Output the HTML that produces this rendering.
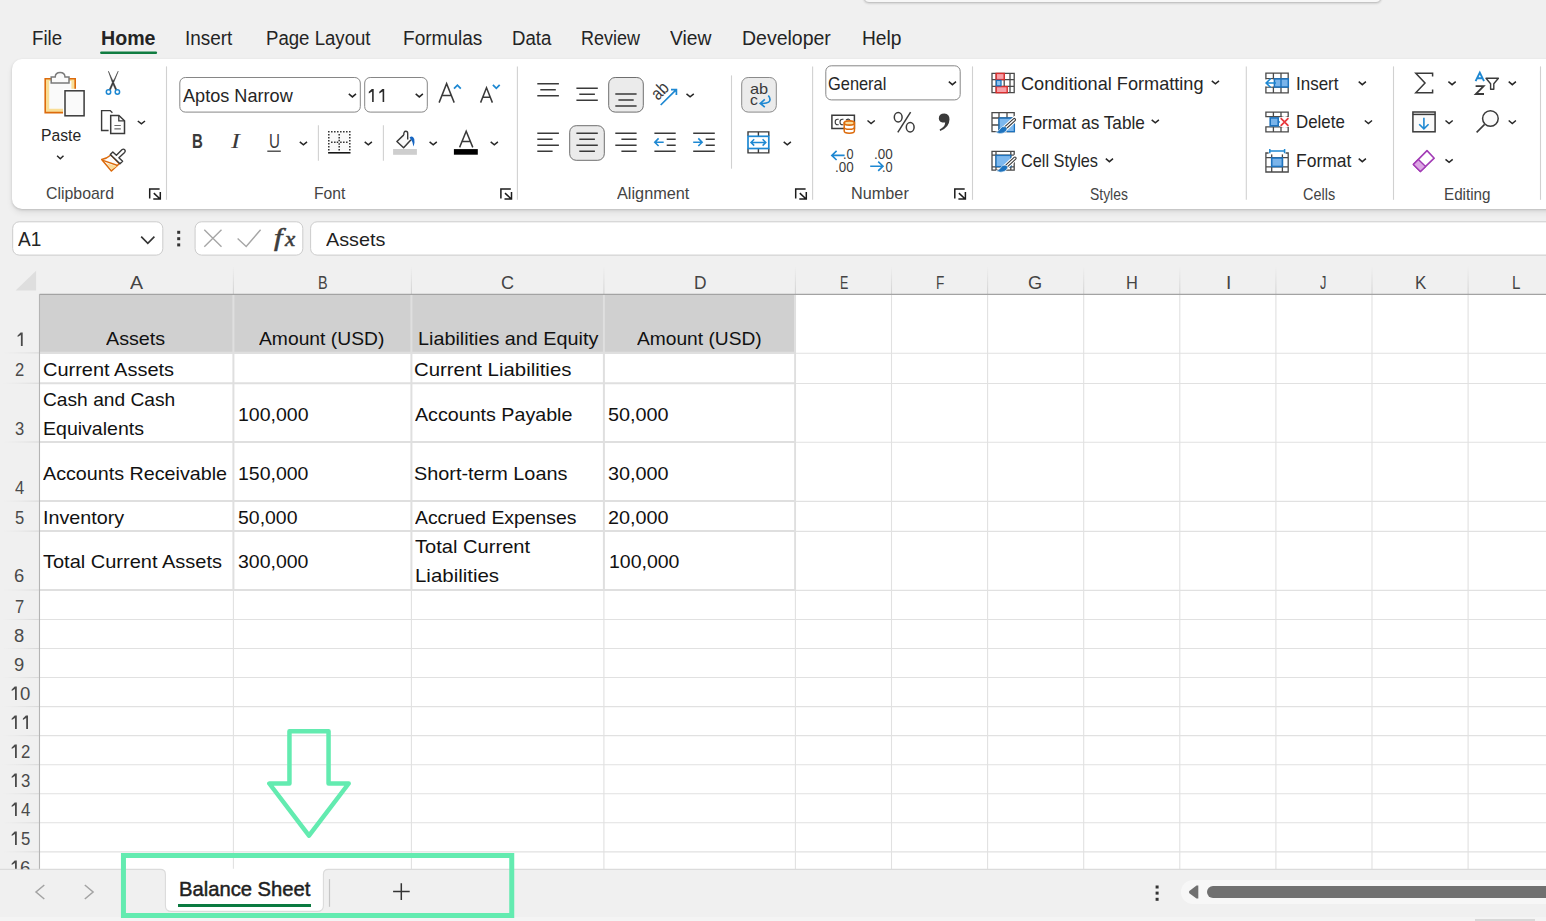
<!DOCTYPE html>
<html><head><meta charset="utf-8"><title>Excel</title>
<style>
html,body{margin:0;padding:0;}
body{width:1546px;height:921px;overflow:hidden;position:relative;background:#f0f0f0;font-family:"Liberation Sans",sans-serif;}
.t{position:absolute;white-space:nowrap;transform-origin:0 0;display:block;}
.b{position:absolute;}
svg.o{position:absolute;left:0;top:0;pointer-events:none;}
</style></head><body>
<div class="b" style="left:862.5px;top:-12px;width:519px;height:14.5px;background:#f7f7f7;border:1px solid #c4c4c4;border-radius:6px;box-sizing:border-box;box-shadow:0 1px 2px rgba(0,0,0,.12);"></div>
<div class="b" style="left:12px;top:59px;width:1560px;height:150px;background:#fff;border-radius:10px;box-shadow:0 1px 2.5px rgba(0,0,0,.17),0 4px 6px rgba(0,0,0,.07);"></div>
<div class="b" style="left:40px;top:295px;width:1520px;height:574px;background:#fff;"></div>
<div class="b" style="left:0px;top:869.4px;width:1546px;height:52px;background:#f0f0f0;"></div>
<div class="b" style="left:0px;top:917.3px;width:1546px;height:4px;background:#f4f4f4;"></div>
<div class="b" style="left:1474.9px;top:918.6px;width:60px;height:3px;background:#d8d8d8;"></div>
<div class="b" style="left:1180.8px;top:879.6px;width:400px;height:24.8px;background:#f7f7f7;border-radius:12.4px;"></div>
<div class="b" style="left:1206.6px;top:885.9px;width:400px;height:12px;background:#707070;border-radius:6px;"></div>
<svg class="o" width="1546" height="921" viewBox="0 0 1546 921">
<rect x="100.10" y="51.50" width="57.00" height="2.40" rx="1.20" fill="#107c41"/>
<path d="M45.2 78.7 H75.2 V92 H65 V112.6 H45.2 Z" fill="#f9de96" stroke="#dc6b0c" stroke-width="1.6"/>
<path d="M49.2 81 H71.4 V92 H65 V108.8 H49.2 Z" fill="#fafafa"/>
<path d="M51.2 83 V77 H55.2 Q55.5 72.6 60.1 72.6 Q64.7 72.6 65 77 H69 V83 Z" fill="#fafafa" stroke="#7a7a7a" stroke-width="1.5"/>
<rect x="63" y="88.8" width="23" height="29" fill="#fff"/>
<rect x="65" y="90.8" width="19.1" height="25" fill="#fafafa" stroke="#3a3a3a" stroke-width="1.5"/>
<path d="M57.1 155.8 L60.3 158.7 L63.5 155.8" fill="none" stroke="#262626" stroke-width="1.5"/>
<path d="M108.4 71.2 L112.6 80.2 L113.9 80.2 L118.2 71.2 L113.7 82.6 L116.9 89.8 L115.6 90.2 L113 84.2 L110.4 90.2 L109.1 89.8 L112.3 82.6 Z" fill="#3a3a3a" stroke="#3a3a3a" stroke-width="0.5" stroke-linejoin="round"/>
<circle cx="108.5" cy="92" r="2.2" fill="#fff" stroke="#1e88d2" stroke-width="1.5"/><circle cx="117.4" cy="92" r="2.2" fill="#fff" stroke="#1e88d2" stroke-width="1.5"/>
<path d="M108.6 130.5 H101.6 V110.6 H110.2 L112.4 112.7" fill="none" stroke="#3a3a3a" stroke-width="1.4"/>
<path d="M110.7 115.4 H118.9 L124.5 120.7 V133.4 H110.7 Z" fill="#fdfdfd" stroke="#3a3a3a" stroke-width="1.5"/>
<path d="M118.8 115.6 V120.8 H124.4" fill="none" stroke="#3a3a3a" stroke-width="1.3"/>
<path d="M114.4 125.5 H120.8 M114.4 128.9 H120.8" stroke="#6a6a6a" stroke-width="1.2"/>
<path d="M137.8 121.0 L141.4 123.9 L145.0 121.0" fill="none" stroke="#262626" stroke-width="1.5"/>
<path d="M101.7 159.4 Q106.8 158.6 110.9 155 L119.3 163.7 L111.4 170.9 Z" fill="#fdfdfd" stroke="#dc6b0c" stroke-width="1.5" stroke-linejoin="round"/>
<path d="M106.6 163.2 L116.8 166.2 L111.4 169.8 Z" fill="#fbdc9a"/>
<path d="M103 160.3 L117.6 165.5" stroke="#dc6b0c" stroke-width="1.4"/>
<path d="M110.3 154.4 L112.8 151.9 L116.4 155.3 L121.9 149.7 Q123.5 148.5 124.7 149.8 Q125.9 151.1 124.6 152.4 L118.9 157.8 L122.6 161.3 L120 163.8 Z" fill="#fff" stroke="#3a3a3a" stroke-width="1.4" stroke-linejoin="round"/>
<path d="M149.7 198.6 V188.95 H159.6 M153.8 193.1 L160.1 199.0 M160.3 192.1 V198.9 H153.3" fill="none" stroke="#1c1c1c" stroke-width="1.5"/>
<path d="M166.5 66.4 V199.8" stroke="#d1d1d1" stroke-width="1.1"/>
<rect x="179.80" y="77.50" width="180.50" height="34.60" rx="5.50" fill="#fff" stroke="#868686" stroke-width="1.0"/>
<path d="M348.8 93.9 L352.4 96.9 L356.0 93.9" fill="none" stroke="#262626" stroke-width="1.5"/>
<rect x="364.70" y="77.50" width="62.60" height="34.60" rx="5.50" fill="#fff" stroke="#868686" stroke-width="1.0"/>
<path d="M373.70 88.90 H371.80 L368.80 91.80 V93.50 L372.10 91.40 V102.00 H373.70 Z" fill="#2a2a2a"/>
<path d="M384.20 88.90 H382.30 L379.30 91.80 V93.50 L382.60 91.40 V102.00 H384.20 Z" fill="#2a2a2a"/>
<path d="M415.7 93.9 L419.3 96.9 L422.9 93.9" fill="none" stroke="#262626" stroke-width="1.5"/>
<path d="M439.1 102.6 L446.6 83.6 L454.2 102.6 M442 95.6 H451.3" fill="none" stroke="#3a3a3a" stroke-width="1.5"/>
<path d="M454 88.6 L457.4 85.2 L460.8 88.6" fill="none" stroke="#1e88d2" stroke-width="1.8"/>
<path d="M480.6 102.6 L486.5 87.8 L492.4 102.6 M482.9 97.2 H490.2" fill="none" stroke="#3a3a3a" stroke-width="1.5"/>
<path d="M492.9 84.9 L496.3 88.3 L499.7 84.9" fill="none" stroke="#1e88d2" stroke-width="1.8"/>
<path d="M267.3 151.2 H280.8" stroke="#3a3a3a" stroke-width="1.3"/>
<path d="M299.8 141.8 L303.4 144.8 L307.0 141.8" fill="none" stroke="#262626" stroke-width="1.5"/>
<path d="M318.4 125.2 V160.8" stroke="#d1d1d1" stroke-width="1.1"/>
<rect x="329.5" y="132.4" width="19.6" height="18" fill="#f9f9f9"/>
<path d="M328.05 130.95h1.5v1.5h-1.5zM331.05 130.95h1.5v1.5h-1.5zM334.05 130.95h1.5v1.5h-1.5zM337.05 130.95h1.5v1.5h-1.5zM340.05 130.95h1.5v1.5h-1.5zM343.05 130.95h1.5v1.5h-1.5zM346.05 130.95h1.5v1.5h-1.5zM349.05 130.95h1.5v1.5h-1.5zM328.05 133.95h1.5v1.5h-1.5zM328.05 136.90h1.5v1.5h-1.5zM328.05 139.95h1.5v1.5h-1.5zM328.05 142.95h1.5v1.5h-1.5zM328.05 145.95h1.5v1.5h-1.5zM328.05 148.95h1.5v1.5h-1.5zM349.05 133.95h1.5v1.5h-1.5zM349.05 136.90h1.5v1.5h-1.5zM349.05 139.95h1.5v1.5h-1.5zM349.05 142.95h1.5v1.5h-1.5zM349.05 145.95h1.5v1.5h-1.5zM349.05 148.95h1.5v1.5h-1.5zM338.45 133.95h1.5v1.5h-1.5zM338.45 136.90h1.5v1.5h-1.5zM338.45 139.75h1.5v1.5h-1.5zM338.45 143.15h1.5v1.5h-1.5zM338.45 145.95h1.5v1.5h-1.5zM338.45 148.95h1.5v1.5h-1.5zM331.05 141.45h1.5v1.5h-1.5zM334.05 141.45h1.5v1.5h-1.5zM336.75 141.45h1.5v1.5h-1.5zM340.15 141.45h1.5v1.5h-1.5zM343.05 141.45h1.5v1.5h-1.5zM346.05 141.45h1.5v1.5h-1.5z" fill="#2e2e2e"/>
<path d="M328.1 152.8 H350.5" stroke="#0a0a0a" stroke-width="1.5"/>
<path d="M364.7 141.8 L368.3 144.8 L371.9 141.8" fill="none" stroke="#262626" stroke-width="1.5"/>
<path d="M383.4 125.2 V160.8" stroke="#d1d1d1" stroke-width="1.1"/>
<path d="M411 139.7 L403.6 147.7 L396.9 141.5 L403.8 134.9" fill="#fafafa" stroke="#3a3a3a" stroke-width="1.5" stroke-linejoin="round"/>
<path d="M403.8 135 Q403.6 131.3 405.8 131.3 Q407.7 131.3 407.7 133.4 V139.6" fill="none" stroke="#3a3a3a" stroke-width="1.4"/>
<path d="M409.6 137.5 Q411.2 135.9 413 137 Q415.1 138.8 414.5 142.4 Q414.1 144.8 413.4 146.4 Q413 141.8 411.2 140 Z" fill="#1766c2"/>
<rect x="393.1" y="149" width="23.8" height="5.8" fill="#cecece"/>
<path d="M429.6 141.8 L433.2 144.8 L436.8 141.8" fill="none" stroke="#262626" stroke-width="1.5"/>
<path d="M459.6 147.4 L466.2 131.3 L472.8 147.4 M462.1 141.5 H470.3" fill="none" stroke="#3a3a3a" stroke-width="1.5"/>
<rect x="453.9" y="149.1" width="23.9" height="5.6" fill="#000"/>
<path d="M490.7 141.8 L494.3 144.8 L497.9 141.8" fill="none" stroke="#262626" stroke-width="1.5"/>
<path d="M500.9 198.6 V188.95 H510.8 M505.0 193.1 L511.3 199.0 M511.5 192.1 V198.9 H504.5" fill="none" stroke="#1c1c1c" stroke-width="1.5"/>
<path d="M517.4 66.4 V199.8" stroke="#d1d1d1" stroke-width="1.1"/>
<rect x="608.70" y="77.50" width="34.60" height="34.60" rx="6.50" fill="#ebebeb" stroke="#6e6e6e" stroke-width="1.0"/>
<rect x="569.70" y="125.70" width="34.60" height="34.60" rx="6.50" fill="#ebebeb" stroke="#6e6e6e" stroke-width="1.0"/>
<rect x="741.70" y="77.50" width="34.60" height="34.60" rx="6.50" fill="#ebebeb" stroke="#8a8a8a" stroke-width="1.0"/>
<path d="M537.3 83.8 H558.9 M540.3 89.8 H555.8 M537.3 95.8 H558.9 " stroke="#3a3a3a" stroke-width="1.5" fill="none"/>
<path d="M576.4 88.3 H597.8 M579.3 94.3 H594.9 M576.4 100.3 H597.8 " stroke="#3a3a3a" stroke-width="1.5" fill="none"/>
<path d="M615.3 94.1 H636.6 M618.4 100.1 H633.7 M615.3 106.1 H636.6 " stroke="#3a3a3a" stroke-width="1.5" fill="none"/>
<path d="M537.3 133.2 H558.9 M537.3 139.2 H552.6 M537.3 145.2 H558.9 M537.3 151.3 H552.6 " stroke="#3a3a3a" stroke-width="1.5" fill="none"/>
<path d="M576.4 133.2 H597.8 M579.3 139.2 H594.9 M576.4 145.2 H597.8 M579.3 151.3 H594.9 " stroke="#3a3a3a" stroke-width="1.5" fill="none"/>
<path d="M615.3 133.2 H636.6 M621.4 139.2 H636.6 M615.3 145.2 H636.6 M621.4 151.3 H636.6 " stroke="#3a3a3a" stroke-width="1.5" fill="none"/>
<path d="M654.4 133.2 H675.7 M666.7 139.2 H675.7 M666.7 145.2 H675.7 M654.4 151.3 H675.7 " stroke="#3a3a3a" stroke-width="1.5" fill="none"/>
<path d="M693.2 133.2 H714.8 M705.7 139.2 H714.8 M705.7 145.2 H714.8 M693.2 151.3 H714.8 " stroke="#3a3a3a" stroke-width="1.5" fill="none"/>
<path d="M663.7 142.2 H655 M658.6 138.4 L654.8 142.2 L658.6 146" fill="none" stroke="#1e88d2" stroke-width="1.6"/>
<path d="M693.2 142.2 H701.9 M698.3 138.4 L702.1 142.2 L698.3 146" fill="none" stroke="#1e88d2" stroke-width="1.6"/>
<path d="M660.7 105 L676 89.9 M671 89.6 H676.4 V95" fill="none" stroke="#1e88d2" stroke-width="1.7"/>
<path d="M686.5 93.9 L690.1 96.9 L693.8 93.9" fill="none" stroke="#262626" stroke-width="1.5"/>
<path d="M731.5 75.4 V168.7" stroke="#d1d1d1" stroke-width="1.1"/>
<path d="M768.3 95.6 Q771.6 99.6 768.6 102.2 Q766.4 103.8 760.6 103.4 M764.8 99.4 L760.2 103.4 L764.8 107.2" fill="none" stroke="#1e88d2" stroke-width="1.6"/>
<path d="M747.3 131.9 H769.5 M747.3 152.9 H769.5 M748 131.2 V136 M758.4 131.2 V136 M768.8 131.2 V136 M748 148.6 V153.6 M758.4 148.6 V153.6 M768.8 148.6 V153.6" stroke="#3a3a3a" stroke-width="1.4" fill="none"/>
<rect x="748" y="136.3" width="20.8" height="12.2" fill="#fff" stroke="#1e88d2" stroke-width="1.7"/>
<path d="M751 142.4 H765.8 M754.2 139.2 L751 142.4 L754.2 145.6 M762.6 139.2 L765.8 142.4 L762.6 145.6" fill="none" stroke="#1e88d2" stroke-width="1.5"/>
<path d="M783.7 141.8 L787.3 144.8 L790.9 141.8" fill="none" stroke="#262626" stroke-width="1.5"/>
<path d="M795.7 198.6 V188.95 H805.6 M799.8 193.1 L806.1 199.0 M806.3 192.1 V198.9 H799.3" fill="none" stroke="#1c1c1c" stroke-width="1.5"/>
<path d="M812.6 66.4 V199.8" stroke="#d1d1d1" stroke-width="1.1"/>
<rect x="825.80" y="65.80" width="134.40" height="34.10" rx="5.50" fill="#fff" stroke="#868686" stroke-width="1.0"/>
<path d="M948.8 81.7 L952.4 84.7 L956.0 81.7" fill="none" stroke="#262626" stroke-width="1.5"/>
<path d="M831.9 115.3 H854.4 V128.6 H831.9 Z" fill="#fff" stroke="#3a3a3a" stroke-width="1.5"/>
<path d="M838.6 119.4 Q835.2 118.6 835.2 122 Q835.2 125.4 838.6 124.6 M843.4 119.4 Q840 118.6 840 122 Q840 125.4 843.4 124.6 M846 120 Q849.6 118 850 121" fill="none" stroke="#3a3a3a" stroke-width="1.2"/>
<path d="M844.2 123 V131 Q844.2 133.2 849.3 133.2 Q854.4 133.2 854.4 131 V123 Z" fill="#fff" stroke="#dc6b0c" stroke-width="1.5"/>
<ellipse cx="849.3" cy="123" rx="5.1" ry="2.1" fill="#fbdc9a" stroke="#dc6b0c" stroke-width="1.6"/>
<path d="M844.2 127.2 Q844.2 129.3 849.3 129.3 Q854.4 129.3 854.4 127.2" fill="none" stroke="#dc6b0c" stroke-width="1.4"/>
<path d="M867.5 120.5 L871.1 123.5 L874.8 120.5" fill="none" stroke="#262626" stroke-width="1.5"/>
<ellipse cx="898.2" cy="117.3" rx="3.9" ry="4.7" fill="none" stroke="#3a3a3a" stroke-width="1.5"/><ellipse cx="910.2" cy="127.3" rx="3.9" ry="4.7" fill="none" stroke="#3a3a3a" stroke-width="1.5"/><path d="M910.6 112.2 L897.8 132.4" stroke="#3a3a3a" stroke-width="1.5"/>
<path d="M944.4 113.4 Q949.6 113.6 949.5 119.6 Q949.3 127.6 940.2 131 L939.6 129.6 Q945 127 945.2 122.6 Q938.8 122.6 938.8 118.4 Q938.8 113.4 944.4 113.4 Z" fill="#3a3a3a"/>
<path d="M844.6 155.4 H832 M836.6 150.8 L831.8 155.4 L836.6 160" fill="none" stroke="#1e88d2" stroke-width="1.6"/>
<path d="M870.2 166.2 H882.8 M878.2 161.6 L883 166.2 L878.2 170.8" fill="none" stroke="#1e88d2" stroke-width="1.6"/>
<path d="M954.8 198.6 V188.95 H964.7 M958.9 193.1 L965.2 199.0 M965.4 192.1 V198.9 H958.4" fill="none" stroke="#1c1c1c" stroke-width="1.5"/>
<path d="M972.5 66.4 V199.8" stroke="#d1d1d1" stroke-width="1.1"/>
<path d="M992 73.4 H1014.2 V92.7 H992 Z M992 79.6 H1014.2 M992 86.4 H1014.2 M996.2 73.4 V92.7 M1004.2 73.4 V92.7 M1010 73.4 V92.7" fill="#fff" stroke="#4a4a4a" stroke-width="1.3"/>
<rect x="996.2" y="73.4" width="8" height="6.2" fill="#f7a0a8" stroke="#d92f2f" stroke-width="1.4"/>
<rect x="996.2" y="86.6" width="11" height="6.1" fill="#f7a0a8" stroke="#d92f2f" stroke-width="1.4"/>
<rect x="996.4" y="80.4" width="4.6" height="5.4" fill="#8fc3f0" stroke="#1e73be" stroke-width="1.3"/>
<path d="M1211.8 80.8 L1215.4 83.8 L1219.0 80.8" fill="none" stroke="#262626" stroke-width="1.5"/>
<path d="M992 112.6 H1014.2 V131.6 H992 Z M992 118 H1014.2 M992 125 H1014.2 M999 112.6 V131.6 M1007 112.6 V131.6" fill="#fff" stroke="#4a4a4a" stroke-width="1.3"/>
<rect x="999.4" y="118.4" width="15" height="13.4" fill="#7db8ee"/>
<path d="M999 118 H1014.4 M999 118 V132 M1007 131.6 H1014.4 V124" fill="none" stroke="#1e73be" stroke-width="1.3"/>
<path d="M1015.3 118.7 L1002.6 130.6" stroke="#fff" stroke-width="5.6" stroke-linecap="round"/>
<path d="M1014.3 119.7 L1004.6 128.6" stroke="#3a3a3a" stroke-width="3.5" stroke-linecap="round"/>
<path d="M1014.3 119.7 L1004.6 128.6" stroke="#fff" stroke-width="1.3" stroke-linecap="round"/>
<path d="M1005.4 126.6 Q1001.8 125.8 1000.2 128.8 Q999.0 131.4 995.4 132.2 Q999.6 134.6 1003.4 133.0 Q1007.2 131.2 1007.2 128.4 Z" fill="#1e73be" stroke="#fff" stroke-width="0.6"/>
<path d="M1151.7 119.8 L1155.3 122.8 L1158.9 119.8" fill="none" stroke="#262626" stroke-width="1.5"/>
<path d="M992 151.4 H1014.2 V170.2 H992 Z M992 155.2 H1014.2 M992 166.8 H1014.2 M996 151.4 V170.2 M1010.8 151.4 V170.2" fill="#fff" stroke="#4a4a4a" stroke-width="1.3"/>
<rect x="996" y="155.4" width="14.8" height="11.2" fill="#7db8ee" stroke="#1e73be" stroke-width="1.3"/>
<path d="M1015.9 157.3 L1003.2 169.2" stroke="#fff" stroke-width="5.6" stroke-linecap="round"/>
<path d="M1014.9 158.3 L1005.2 167.2" stroke="#3a3a3a" stroke-width="3.5" stroke-linecap="round"/>
<path d="M1014.9 158.3 L1005.2 167.2" stroke="#fff" stroke-width="1.3" stroke-linecap="round"/>
<path d="M1006.0 165.2 Q1002.4 164.4 1000.8 167.4 Q999.6 170.0 996.0 170.8 Q1000.2 173.2 1004.0 171.6 Q1007.8 169.8 1007.8 167.0 Z" fill="#1e73be" stroke="#fff" stroke-width="0.6"/>
<path d="M1105.8 158.7 L1109.4 161.7 L1113.0 158.7" fill="none" stroke="#262626" stroke-width="1.5"/>
<path d="M1246.3 66.4 V199.8" stroke="#d1d1d1" stroke-width="1.1"/>
<path d="M1265.9 73.2 H1288.2 V92.8 H1265.9 Z M1265.9 78.6 H1288.2 M1265.9 87.2 H1288.2 M1273.4 73.2 V92.8 M1281 73.2 V92.8" fill="#fff" stroke="#4a4a4a" stroke-width="1.3"/>
<rect x="1263" y="79.4" width="11.4" height="7" fill="#fff"/>
<rect x="1274.4" y="78.9" width="13.9" height="8.1" fill="#7ab4ea" stroke="#1e73be" stroke-width="1.5"/><path d="M1281 78.9 V87" stroke="#1e73be" stroke-width="1.4"/>
<path d="M1276 83 H1266.4 M1270.7 78.5 L1266.2 83 L1270.7 87.5" fill="none" stroke="#1e88d2" stroke-width="1.7"/>
<path d="M1358.7 81.7 L1362.3 84.7 L1365.9 81.7" fill="none" stroke="#262626" stroke-width="1.5"/>
<path d="M1265.9 112.2 H1288.2 V116.7 H1265.9 Z M1273.4 112.2 V116.7 M1281 112.2 V116.7 M1265.9 126.9 H1288.2 V131.8 H1265.9 Z M1273.4 126.9 V131.8 M1281 126.9 V131.8" fill="#fff" stroke="#4a4a4a" stroke-width="1.3"/>
<circle cx="1284.6" cy="122" r="6" fill="#fff"/>
<rect x="1270.2" y="117.9" width="8" height="7.9" fill="#7ab4ea" stroke="#1e73be" stroke-width="1.6"/>
<path d="M1278.6 120.2 L1280.2 121.9 L1278.6 123.6 Z" fill="#1e73be"/>
<path d="M1280.7 118.1 L1288.4 125.9 M1288.4 118.1 L1280.7 125.9" stroke="#e8383d" stroke-width="1.7"/>
<path d="M1364.8 120.5 L1368.4 123.5 L1372.0 120.5" fill="none" stroke="#262626" stroke-width="1.5"/>
<path d="M1265.9 153 H1288.2 V172 H1265.9 Z M1265.9 157.7 H1288.2 M1265.9 166.8 H1288.2 M1271.7 153 V172 M1282.4 153 V172" fill="#fff" stroke="#4a4a4a" stroke-width="1.3"/>
<rect x="1268.6" y="148.4" width="17" height="6" fill="#fff"/>
<rect x="1271.7" y="158" width="10.7" height="8.5" fill="#7ab4ea" stroke="#1e73be" stroke-width="1.6"/>
<path d="M1269.8 150.9 H1284.6 M1269.8 148.9 V153.2 M1284.6 148.9 V153.2" stroke="#1e88d2" stroke-width="1.5" fill="none"/>
<path d="M1358.7 158.7 L1362.3 161.7 L1365.9 158.7" fill="none" stroke="#262626" stroke-width="1.5"/>
<path d="M1393.5 66.4 V199.8" stroke="#d1d1d1" stroke-width="1.1"/>
<path d="M1432.6 76.6 V73.3 H1415.8 L1425 83 L1415.8 92.7 H1432.6 V89.4" fill="none" stroke="#3a3a3a" stroke-width="1.5" stroke-linejoin="miter"/>
<path d="M1448.4 81.7 L1452.1 84.7 L1455.7 81.7" fill="none" stroke="#262626" stroke-width="1.5"/>
<path d="M1475.6 81.2 L1479.8 72.6 L1484 81.2 M1477.2 78.2 H1482.4" fill="none" stroke="#1e88d2" stroke-width="1.9"/>
<path d="M1475.6 86.2 H1483.6 L1475.8 94 H1484" fill="none" stroke="#3a3a3a" stroke-width="1.8"/>
<path d="M1486 78.3 H1498.4 L1493.8 83.8 V89.2 H1490.6 V83.8 Z" fill="#fff" stroke="#3a3a3a" stroke-width="1.4" stroke-linejoin="round"/>
<path d="M1508.7 81.7 L1512.3 84.7 L1515.9 81.7" fill="none" stroke="#262626" stroke-width="1.5"/>
<rect x="1412.9" y="112" width="22.2" height="19.8" fill="#fafafa" stroke="#3a3a3a" stroke-width="1.5"/><path d="M1412.9 114.4 H1435.1" stroke="#3a3a3a" stroke-width="1.5"/>
<path d="M1423.9 117.8 V128.8 M1419.2 124.2 L1423.9 128.9 L1428.6 124.2" fill="none" stroke="#1e88d2" stroke-width="1.6"/>
<path d="M1445.5 120.5 L1449.1 123.5 L1452.7 120.5" fill="none" stroke="#262626" stroke-width="1.5"/>
<circle cx="1490.4" cy="118.5" r="7.8" fill="#fafafa" stroke="#3a3a3a" stroke-width="1.5"/><path d="M1484.6 124.4 L1476.6 132.4" stroke="#3a3a3a" stroke-width="1.6"/>
<path d="M1508.7 120.5 L1512.3 123.5 L1515.9 120.5" fill="none" stroke="#262626" stroke-width="1.5"/>
<path d="M1413.4 164.4 L1427 150.6 L1434.2 158.2 L1420.4 171.4 Z" fill="#fff" stroke="#a23bb5" stroke-width="1.6" stroke-linejoin="round"/>
<path d="M1413.4 164.4 L1418.4 159.4 L1425.6 166.6 L1420.4 171.4 Z" fill="#dca6e4" stroke="#a23bb5" stroke-width="1.4" stroke-linejoin="round"/>
<path d="M1445.5 159.3 L1449.1 162.3 L1452.7 159.3" fill="none" stroke="#262626" stroke-width="1.5"/>
<path d="M1540.5 66.4 V199.8" stroke="#d1d1d1" stroke-width="1.1"/>
<rect x="12.70" y="221.80" width="150.10" height="33.30" rx="6.50" fill="#fff" stroke="#cccccc" stroke-width="1.0"/>
<path d="M141.2 236.6 L147.8 243.4 L154.4 236.6" fill="none" stroke="#333" stroke-width="1.6"/>
<rect x="177.2" y="230.8" width="3" height="3" fill="#333"/>
<rect x="177.2" y="237.2" width="3" height="3" fill="#333"/>
<rect x="177.2" y="243.4" width="3" height="3" fill="#333"/>
<rect x="195.10" y="221.80" width="107.70" height="33.30" rx="6.50" fill="#fff" stroke="#cccccc" stroke-width="1.0"/>
<path d="M204.3 229.7 L221.5 246.7 M221.5 229.7 L204.3 246.7" stroke="#a6a6a6" stroke-width="1.4" fill="none"/>
<path d="M237.6 238.6 L246.2 246.4 L260.6 229.8" stroke="#a6a6a6" stroke-width="1.4" fill="none"/>
<rect x="310.60" y="221.80" width="1259.00" height="33.30" rx="6.50" fill="#fff" stroke="#cccccc" stroke-width="1.0"/>
<rect x="40.00" y="294.90" width="754.40" height="57.00" rx="0.00" fill="#d0d0d0"/>
<rect x="232.85" y="266" width="1.1" height="28" fill="url(#cg)"/>
<rect x="410.85" y="266" width="1.1" height="28" fill="url(#cg)"/>
<rect x="603.35" y="266" width="1.1" height="28" fill="url(#cg)"/>
<rect x="794.85" y="266" width="1.1" height="28" fill="url(#cg)"/>
<rect x="890.95" y="266" width="1.1" height="28" fill="url(#cg)"/>
<rect x="987.05" y="266" width="1.1" height="28" fill="url(#cg)"/>
<rect x="1083.15" y="266" width="1.1" height="28" fill="url(#cg)"/>
<rect x="1179.25" y="266" width="1.1" height="28" fill="url(#cg)"/>
<rect x="1275.35" y="266" width="1.1" height="28" fill="url(#cg)"/>
<rect x="1371.45" y="266" width="1.1" height="28" fill="url(#cg)"/>
<rect x="1467.55" y="266" width="1.1" height="28" fill="url(#cg)"/>
<rect x="1563.65" y="266" width="1.1" height="28" fill="url(#cg)"/>
<defs><linearGradient id="cg" x1="0" x2="0" y1="0" y2="1"><stop offset="0" stop-color="#d2d2d2" stop-opacity="0"/><stop offset="1" stop-color="#d2d2d2"/></linearGradient></defs>
<path d="M15.6 290.6 H36.1 V270.8 Z" fill="#dedede"/>
<path d="M795.4 295 V869.1" stroke="#e1e1e1" stroke-width="1.1"/>
<path d="M891.5 295 V869.1" stroke="#e1e1e1" stroke-width="1.1"/>
<path d="M987.6 295 V869.1" stroke="#e1e1e1" stroke-width="1.1"/>
<path d="M1083.7 295 V869.1" stroke="#e1e1e1" stroke-width="1.1"/>
<path d="M1179.8 295 V869.1" stroke="#e1e1e1" stroke-width="1.1"/>
<path d="M1275.9 295 V869.1" stroke="#e1e1e1" stroke-width="1.1"/>
<path d="M1372.0 295 V869.1" stroke="#e1e1e1" stroke-width="1.1"/>
<path d="M1468.1 295 V869.1" stroke="#e1e1e1" stroke-width="1.1"/>
<path d="M233.4 590 V869.1" stroke="#e1e1e1" stroke-width="1.1"/>
<path d="M411.4 590 V869.1" stroke="#e1e1e1" stroke-width="1.1"/>
<path d="M603.9 590 V869.1" stroke="#e1e1e1" stroke-width="1.1"/>
<path d="M40 619.45 H1546" stroke="#e1e1e1" stroke-width="1.1"/>
<path d="M40 648.5 H1546" stroke="#e1e1e1" stroke-width="1.1"/>
<path d="M40 677.55 H1546" stroke="#e1e1e1" stroke-width="1.1"/>
<path d="M40 706.6 H1546" stroke="#e1e1e1" stroke-width="1.1"/>
<path d="M40 735.65 H1546" stroke="#e1e1e1" stroke-width="1.1"/>
<path d="M40 764.7 H1546" stroke="#e1e1e1" stroke-width="1.1"/>
<path d="M40 793.75 H1546" stroke="#e1e1e1" stroke-width="1.1"/>
<path d="M40 822.8 H1546" stroke="#e1e1e1" stroke-width="1.1"/>
<path d="M40 851.85 H1546" stroke="#e1e1e1" stroke-width="1.1"/>
<path d="M795.4 353.2 H1546" stroke="#e1e1e1" stroke-width="1.1"/>
<path d="M795.4 383.5 H1546" stroke="#e1e1e1" stroke-width="1.1"/>
<path d="M795.4 442.3 H1546" stroke="#e1e1e1" stroke-width="1.1"/>
<path d="M795.4 501.40000000000003 H1546" stroke="#e1e1e1" stroke-width="1.1"/>
<path d="M795.4 531.4 H1546" stroke="#e1e1e1" stroke-width="1.1"/>
<path d="M795.4 590.4 H1546" stroke="#e1e1e1" stroke-width="1.1"/>
<path d="M233.4 295 V590.5" stroke="#dfdfdf" stroke-width="2"/>
<path d="M411.4 295 V590.5" stroke="#dfdfdf" stroke-width="2"/>
<path d="M603.9 295 V590.5" stroke="#dfdfdf" stroke-width="2"/>
<path d="M795.1 295 V590.8" stroke="#dfdfdf" stroke-width="1.9"/>
<path d="M40 352.9 H796" stroke="#dfdfdf" stroke-width="2"/>
<path d="M40 383.2 H796" stroke="#dfdfdf" stroke-width="2"/>
<path d="M40 442.0 H796" stroke="#dfdfdf" stroke-width="2"/>
<path d="M40 501.1 H796" stroke="#dfdfdf" stroke-width="2"/>
<path d="M40 531.1 H796" stroke="#dfdfdf" stroke-width="2"/>
<path d="M40 590 H796" stroke="#dfdfdf" stroke-width="2"/>
<path d="M39.5 294.4 H1546" stroke="#a3a3a3" stroke-width="1.1"/>
<path d="M39.5 294 V869.1" stroke="#b4b4b4" stroke-width="1.1"/>
<defs><linearGradient id="rg" x1="0" x2="1" y1="0" y2="0"><stop offset="0" stop-color="#e0e0e0" stop-opacity="0"/><stop offset="1" stop-color="#d6d6d6"/></linearGradient></defs>
<rect x="2" y="352.4" width="37" height="1" fill="url(#rg)"/>
<rect x="2" y="382.7" width="37" height="1" fill="url(#rg)"/>
<rect x="2" y="441.5" width="37" height="1" fill="url(#rg)"/>
<rect x="2" y="500.6" width="37" height="1" fill="url(#rg)"/>
<rect x="2" y="530.6" width="37" height="1" fill="url(#rg)"/>
<rect x="2" y="589.5" width="37" height="1" fill="url(#rg)"/>
<rect x="2" y="618.95" width="37" height="1" fill="url(#rg)"/>
<rect x="2" y="648.0" width="37" height="1" fill="url(#rg)"/>
<rect x="2" y="677.05" width="37" height="1" fill="url(#rg)"/>
<rect x="2" y="706.1" width="37" height="1" fill="url(#rg)"/>
<rect x="2" y="735.15" width="37" height="1" fill="url(#rg)"/>
<rect x="2" y="764.2" width="37" height="1" fill="url(#rg)"/>
<rect x="2" y="793.25" width="37" height="1" fill="url(#rg)"/>
<rect x="2" y="822.3" width="37" height="1" fill="url(#rg)"/>
<rect x="2" y="851.35" width="37" height="1" fill="url(#rg)"/>
<path d="M22.70 332.50 H20.60 L17.60 335.40 V337.10 L20.90 335.00 V346.00 H22.70 Z" fill="#4a4a4a"/>
<path d="M16.80 686.50 H14.70 L11.70 689.40 V691.10 L15.00 689.00 V700.00 H16.80 Z" fill="#4a4a4a"/>
<path d="M16.80 715.50 H14.70 L11.70 718.40 V720.10 L15.00 718.00 V729.00 H16.80 Z" fill="#4a4a4a"/>
<path d="M28.00 715.50 H25.90 L22.90 718.40 V720.10 L26.20 718.00 V729.00 H28.00 Z" fill="#4a4a4a"/>
<path d="M16.80 744.50 H14.70 L11.70 747.40 V749.10 L15.00 747.00 V758.00 H16.80 Z" fill="#4a4a4a"/>
<path d="M16.80 773.50 H14.70 L11.70 776.40 V778.10 L15.00 776.00 V787.00 H16.80 Z" fill="#4a4a4a"/>
<path d="M16.80 802.50 H14.70 L11.70 805.40 V807.10 L15.00 805.00 V816.00 H16.80 Z" fill="#4a4a4a"/>
<path d="M16.80 831.50 H14.70 L11.70 834.40 V836.10 L15.00 834.00 V845.00 H16.80 Z" fill="#4a4a4a"/>
<g clip-path="url(#c16)"><path d="M16.80 860.50 H14.70 L11.70 863.40 V865.10 L15.00 863.00 V874.00 H16.80 Z" fill="#4a4a4a"/></g>
<defs><clipPath id="c16"><rect x="0" y="850" width="40" height="19.3"/></clipPath></defs>
<path d="M159 868.8 H160.4 Q165.4 869.4 165.4 874.4 V905.4 Q165.4 911.4 171.4 911.4 H317.4 Q323.4 911.4 323.4 905.4 V874.4 Q323.4 869.4 328.4 868.8 Z" fill="#fff"/>
<path d="M0 869.4 H160.4 Q165.4 869.4 165.4 874.4 V905.4 Q165.4 911.4 171.4 911.4 H317.4 Q323.4 911.4 323.4 905.4 V874.4 Q323.4 869.4 328.4 869.4 H1546" fill="none" stroke="#dbdbdb" stroke-width="1.1"/>
<rect x="178" y="904" width="133" height="3" fill="#0b7a40"/>
<path d="M329.5 879.1 V906.8" stroke="#c6c6c6" stroke-width="1.2"/>
<path d="M401.3 883.2 V900.1 M393.1 891.6 H409.7" stroke="#333" stroke-width="1.5"/>
<path d="M44.3 885 L36 892 L44.3 899" fill="none" stroke="#a3a3a3" stroke-width="1.5"/>
<path d="M84.8 885 L93.1 892 L84.8 899" fill="none" stroke="#a3a3a3" stroke-width="1.5"/>
<rect x="1155.6" y="885.5" width="3" height="3" fill="#333"/>
<rect x="1155.6" y="891.6" width="3" height="3" fill="#333"/>
<rect x="1155.6" y="897.8" width="3" height="3" fill="#333"/>
<path d="M1198.3 885.6 V898.6 H1196.5 L1189.3 893.3 Q1188.6 892.1 1189.3 891 L1196.5 885.6 Z" fill="#707070"/>
</svg>
<span class="t" style="left:32.00px;top:28.00px;font-size:20px;line-height:20px;color:#242424;transform:scaleX(0.9348);">File</span>
<span class="t" style="left:101.00px;top:28.00px;font-size:20px;line-height:20px;color:#242424;font-weight:700;transform:scaleX(0.9802);">Home</span>
<span class="t" style="left:185.00px;top:28.00px;font-size:20px;line-height:20px;color:#242424;transform:scaleX(0.9460);">Insert</span>
<span class="t" style="left:266.00px;top:28.00px;font-size:20px;line-height:20px;color:#242424;transform:scaleX(0.9305);">Page Layout</span>
<span class="t" style="left:403.00px;top:28.00px;font-size:20px;line-height:20px;color:#242424;transform:scaleX(0.9520);">Formulas</span>
<span class="t" style="left:512.00px;top:28.00px;font-size:20px;line-height:20px;color:#242424;transform:scaleX(0.9314);">Data</span>
<span class="t" style="left:581.00px;top:28.00px;font-size:20px;line-height:20px;color:#242424;transform:scaleX(0.8979);">Review</span>
<span class="t" style="left:670.00px;top:28.00px;font-size:20px;line-height:20px;color:#242424;transform:scaleX(0.9628);">View</span>
<span class="t" style="left:742.00px;top:28.00px;font-size:20px;line-height:20px;color:#242424;transform:scaleX(0.9748);">Developer</span>
<span class="t" style="left:862.00px;top:28.00px;font-size:20px;line-height:20px;color:#242424;transform:scaleX(0.9586);">Help</span>
<span class="t" style="left:41.00px;top:127.00px;font-size:17.4px;line-height:17.4px;color:#262626;transform:scaleX(0.9020);">Paste</span>
<span class="t" style="left:46.00px;top:185.00px;font-size:16.4px;line-height:16.4px;color:#444;transform:scaleX(0.9688);">Clipboard</span>
<span class="t" style="left:183.00px;top:87.00px;font-size:18.6px;line-height:18.6px;color:#262626;transform:scaleX(0.9741);">Aptos Narrow</span>
<span class="t" style="left:192.00px;top:131.00px;font-size:20.6px;line-height:20.6px;color:#3a3a3a;font-weight:700;transform:scaleX(0.7282);">B</span>
<span class="t" style="left:231.00px;top:131.00px;font-size:21px;line-height:21px;color:#3a3a3a;font-style:italic;font-family:'Liberation Serif', serif;transform:scaleX(1.2698);">I</span>
<span class="t" style="left:269.00px;top:131.00px;font-size:20.4px;line-height:20.4px;color:#3a3a3a;transform:scaleX(0.7421);">U</span>
<span class="t" style="left:314.00px;top:185.00px;font-size:16.4px;line-height:16.4px;color:#444;transform:scaleX(0.9573);">Font</span>
<span class="t" style="left:657.9px;top:86px;font-size:18px;line-height:18px;color:#3a3a3a;transform-origin:0 15px;transform:rotate(-45deg) scaleX(0.845);">ab</span>
<span class="t" style="left:750.00px;top:82.00px;font-size:14.6px;line-height:14.6px;color:#3a3a3a;transform:scaleX(1.1230);">ab</span>
<span class="t" style="left:750.00px;top:93.00px;font-size:14.6px;line-height:14.6px;color:#3a3a3a;transform:scaleX(1.0822);">c</span>
<span class="t" style="left:617.00px;top:185.00px;font-size:16.4px;line-height:16.4px;color:#444;transform:scaleX(0.9932);">Alignment</span>
<span class="t" style="left:828.00px;top:75.00px;font-size:18.6px;line-height:18.6px;color:#262626;transform:scaleX(0.8820);">General</span>
<span class="t" style="left:843.00px;top:146.00px;font-size:15px;line-height:15px;color:#3a3a3a;transform:scaleX(0.8463);">.0</span>
<span class="t" style="left:835.00px;top:159.00px;font-size:15px;line-height:15px;color:#3a3a3a;transform:scaleX(0.8921);">.00</span>
<span class="t" style="left:874.00px;top:146.00px;font-size:15px;line-height:15px;color:#3a3a3a;transform:scaleX(0.8969);">.00</span>
<span class="t" style="left:882.00px;top:159.00px;font-size:15px;line-height:15px;color:#3a3a3a;transform:scaleX(0.8543);">.0</span>
<span class="t" style="left:851.00px;top:185.00px;font-size:16.4px;line-height:16.4px;color:#444;transform:scaleX(0.9914);">Number</span>
<span class="t" style="left:1021.00px;top:76.00px;font-size:17.8px;line-height:17.8px;color:#262626;transform:scaleX(1.0203);">Conditional Formatting</span>
<span class="t" style="left:1022.00px;top:115.00px;font-size:17.8px;line-height:17.8px;color:#262626;transform:scaleX(0.9657);">Format as Table</span>
<span class="t" style="left:1021.00px;top:153.00px;font-size:17.8px;line-height:17.8px;color:#262626;transform:scaleX(0.9167);">Cell Styles</span>
<span class="t" style="left:1090.00px;top:186.00px;font-size:16.4px;line-height:16.4px;color:#444;transform:scaleX(0.8481);">Styles</span>
<span class="t" style="left:1296.00px;top:76.00px;font-size:17.8px;line-height:17.8px;color:#262626;transform:scaleX(0.9551);">Insert</span>
<span class="t" style="left:1296.00px;top:114.00px;font-size:17.8px;line-height:17.8px;color:#262626;transform:scaleX(0.9486);">Delete</span>
<span class="t" style="left:1296.00px;top:153.00px;font-size:17.8px;line-height:17.8px;color:#262626;transform:scaleX(0.9851);">Format</span>
<span class="t" style="left:1303.00px;top:186.00px;font-size:16.4px;line-height:16.4px;color:#444;transform:scaleX(0.8824);">Cells</span>
<span class="t" style="left:1444.00px;top:186.00px;font-size:16.4px;line-height:16.4px;color:#444;transform:scaleX(0.9286);">Editing</span>
<span class="t" style="left:18.00px;top:230.00px;font-size:19.5px;line-height:19.5px;color:#242424;transform:scaleX(0.9754);">A1</span>
<span class="t" style="left:274.00px;top:225.00px;font-size:25px;line-height:25px;color:#3d3d3d;font-style:italic;font-family:'Liberation Serif', serif;transform:scaleX(1.2152);-webkit-text-stroke:0.55px #3d3d3d;">f</span>
<span class="t" style="left:285.00px;top:229.00px;font-size:21px;line-height:21px;color:#3d3d3d;font-style:italic;font-family:'Liberation Serif', serif;transform:scaleX(1.0915);-webkit-text-stroke:0.55px #3d3d3d;">x</span>
<span class="t" style="left:326.00px;top:230.00px;font-size:19px;line-height:19px;color:#1f1f1f;transform:scaleX(1.0421);">Assets</span>
<span class="t" style="left:130.00px;top:273.00px;font-size:19.2px;line-height:19.2px;color:#444;transform:scaleX(1.0183);">A</span>
<span class="t" style="left:318.00px;top:273.00px;font-size:19.2px;line-height:19.2px;color:#444;transform:scaleX(0.7519);">B</span>
<span class="t" style="left:501.00px;top:273.00px;font-size:19.2px;line-height:19.2px;color:#444;transform:scaleX(0.9404);">C</span>
<span class="t" style="left:694.00px;top:273.00px;font-size:19.2px;line-height:19.2px;color:#444;transform:scaleX(0.9042);">D</span>
<span class="t" style="left:840.00px;top:273.00px;font-size:19.2px;line-height:19.2px;color:#444;transform:scaleX(0.6501);">E</span>
<span class="t" style="left:936.00px;top:273.00px;font-size:19.2px;line-height:19.2px;color:#444;transform:scaleX(0.7087);">F</span>
<span class="t" style="left:1028.00px;top:273.00px;font-size:19.2px;line-height:19.2px;color:#444;transform:scaleX(0.9482);">G</span>
<span class="t" style="left:1126.00px;top:273.00px;font-size:19.2px;line-height:19.2px;color:#444;transform:scaleX(0.8536);">H</span>
<span class="t" style="left:1226.00px;top:273.00px;font-size:19.2px;line-height:19.2px;color:#444;">I</span>
<span class="t" style="left:1320.00px;top:273.00px;font-size:19.2px;line-height:19.2px;color:#444;transform:scaleX(0.6667);">J</span>
<span class="t" style="left:1415.00px;top:273.00px;font-size:19.2px;line-height:19.2px;color:#444;transform:scaleX(0.8850);">K</span>
<span class="t" style="left:1512.00px;top:273.00px;font-size:19.2px;line-height:19.2px;color:#444;transform:scaleX(0.7883);">L</span>
<span class="t" style="left:15.00px;top:360.00px;font-size:19.2px;line-height:19.2px;color:#4a4a4a;transform:scaleX(0.8634);">2</span>
<span class="t" style="left:15.00px;top:419.00px;font-size:19.2px;line-height:19.2px;color:#4a4a4a;transform:scaleX(0.8634);">3</span>
<span class="t" style="left:15.00px;top:478.00px;font-size:19.2px;line-height:19.2px;color:#4a4a4a;transform:scaleX(0.8634);">4</span>
<span class="t" style="left:15.00px;top:508.00px;font-size:19.2px;line-height:19.2px;color:#4a4a4a;transform:scaleX(0.8634);">5</span>
<span class="t" style="left:14.00px;top:566.00px;font-size:19.2px;line-height:19.2px;color:#4a4a4a;transform:scaleX(0.9572);">6</span>
<span class="t" style="left:15.00px;top:597.00px;font-size:19.2px;line-height:19.2px;color:#4a4a4a;transform:scaleX(0.8634);">7</span>
<span class="t" style="left:14.00px;top:626.00px;font-size:19.2px;line-height:19.2px;color:#4a4a4a;transform:scaleX(0.9572);">8</span>
<span class="t" style="left:14.00px;top:655.00px;font-size:19.2px;line-height:19.2px;color:#4a4a4a;transform:scaleX(0.9572);">9</span>
<span class="t" style="left:20.00px;top:684.00px;font-size:19.2px;line-height:19.2px;color:#4a4a4a;transform:scaleX(0.9666);">0</span>
<span class="t" style="left:21.00px;top:742.00px;font-size:19.2px;line-height:19.2px;color:#4a4a4a;transform:scaleX(0.8727);">2</span>
<span class="t" style="left:21.00px;top:771.00px;font-size:19.2px;line-height:19.2px;color:#4a4a4a;transform:scaleX(0.8727);">3</span>
<span class="t" style="left:21.00px;top:800.00px;font-size:19.2px;line-height:19.2px;color:#4a4a4a;transform:scaleX(0.8727);">4</span>
<span class="t" style="left:21.00px;top:829.00px;font-size:19.2px;line-height:19.2px;color:#4a4a4a;transform:scaleX(0.8727);">5</span>
<span class="t" style="left:20.00px;top:858.00px;font-size:19.2px;line-height:19.2px;color:#4a4a4a;transform:scaleX(0.9666);clip-path:inset(0 0 8.0px 0);">6</span>
<span class="t" style="left:106.00px;top:329.00px;font-size:19px;line-height:19px;color:#111;transform:scaleX(1.0368);">Assets</span>
<span class="t" style="left:259.00px;top:329.00px;font-size:19px;line-height:19px;color:#111;transform:scaleX(1.0146);">Amount (USD)</span>
<span class="t" style="left:418.00px;top:329.00px;font-size:19px;line-height:19px;color:#111;transform:scaleX(1.0411);">Liabilities and Equity</span>
<span class="t" style="left:637.00px;top:329.00px;font-size:19px;line-height:19px;color:#111;transform:scaleX(1.0097);">Amount (USD)</span>
<span class="t" style="left:43.00px;top:360.00px;font-size:19px;line-height:19px;color:#111;transform:scaleX(1.0518);">Current Assets</span>
<span class="t" style="left:414.00px;top:360.00px;font-size:19px;line-height:19px;color:#111;transform:scaleX(1.0724);">Current Liabilities</span>
<span class="t" style="left:43.00px;top:390.00px;font-size:19px;line-height:19px;color:#111;transform:scaleX(1.0099);">Cash and Cash</span>
<span class="t" style="left:43.00px;top:419.00px;font-size:19px;line-height:19px;color:#111;transform:scaleX(1.0282);">Equivalents</span>
<span class="t" style="left:238.00px;top:405.00px;font-size:19px;line-height:19px;color:#111;transform:scaleX(1.0264);">100,000</span>
<span class="t" style="left:415.00px;top:405.00px;font-size:19px;line-height:19px;color:#111;transform:scaleX(1.0349);">Accounts Payable</span>
<span class="t" style="left:608.00px;top:405.00px;font-size:19px;line-height:19px;color:#111;transform:scaleX(1.0423);">50,000</span>
<span class="t" style="left:43.00px;top:464.00px;font-size:19px;line-height:19px;color:#111;transform:scaleX(1.0369);">Accounts Receivable</span>
<span class="t" style="left:238.00px;top:464.00px;font-size:19px;line-height:19px;color:#111;transform:scaleX(1.0250);">150,000</span>
<span class="t" style="left:414.00px;top:464.00px;font-size:19px;line-height:19px;color:#111;transform:scaleX(1.0451);">Short-term Loans</span>
<span class="t" style="left:608.00px;top:464.00px;font-size:19px;line-height:19px;color:#111;transform:scaleX(1.0423);">30,000</span>
<span class="t" style="left:43.00px;top:508.00px;font-size:19px;line-height:19px;color:#111;transform:scaleX(1.0386);">Inventory</span>
<span class="t" style="left:238.00px;top:508.00px;font-size:19px;line-height:19px;color:#111;transform:scaleX(1.0234);">50,000</span>
<span class="t" style="left:415.00px;top:508.00px;font-size:19px;line-height:19px;color:#111;transform:scaleX(1.0192);">Accrued Expenses</span>
<span class="t" style="left:608.00px;top:508.00px;font-size:19px;line-height:19px;color:#111;transform:scaleX(1.0423);">20,000</span>
<span class="t" style="left:43.00px;top:552.00px;font-size:19px;line-height:19px;color:#111;transform:scaleX(1.0526);">Total Current Assets</span>
<span class="t" style="left:238.00px;top:552.00px;font-size:19px;line-height:19px;color:#111;transform:scaleX(1.0250);">300,000</span>
<span class="t" style="left:415.00px;top:537.00px;font-size:19px;line-height:19px;color:#111;transform:scaleX(1.0581);">Total Current</span>
<span class="t" style="left:415.00px;top:566.00px;font-size:19px;line-height:19px;color:#111;transform:scaleX(1.0757);">Liabilities</span>
<span class="t" style="left:609.00px;top:552.00px;font-size:19px;line-height:19px;color:#111;transform:scaleX(1.0250);">100,000</span>
<span class="t" style="left:179.00px;top:878.00px;font-size:21px;line-height:21px;color:#1f1f1f;transform:scaleX(0.9619);-webkit-text-stroke:0.5px #1f1f1f;">Balance Sheet</span>
<svg class="o" width="1546" height="921" viewBox="0 0 1546 921">
<rect x="123.45" y="855.5" width="388.3" height="60" fill="none" stroke="#63ebb0" stroke-width="5"/>
<path d="M289.45 731.35 H328.55 V783.5 H348.7 L309 835.7 L269.3 783.5 H289.45 Z" fill="none" stroke="#63ebb0" stroke-width="4.5" stroke-linejoin="round"/>
</svg>
</body></html>
